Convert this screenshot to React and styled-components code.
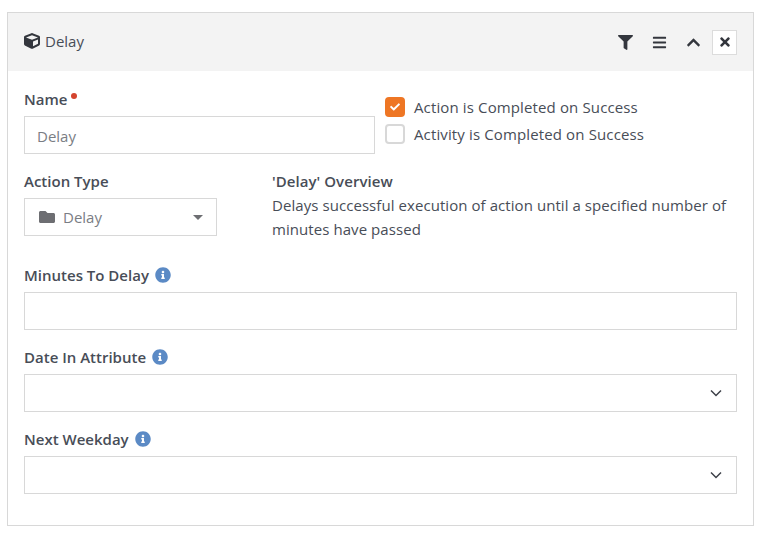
import styled, { createGlobalStyle } from 'styled-components';
import { FaCube, FaFilter, FaBars, FaChevronUp, FaTimes, FaFolder, FaInfoCircle, FaCheck } from 'react-icons/fa';

const GlobalStyle = createGlobalStyle`
  html, body {
    margin: 0;
    padding: 0;
    background: #fff;
  }
  body {
    font-family: 'Open Sans', sans-serif;
    font-size: 15px;
    line-height: 24px;
    color: #484d57;
  }
`;

const Page = styled.div`
  padding: 12px 7px 8px;
`;

const Panel = styled.section`
  box-sizing: border-box;
  width: 747px;
  height: 514px;
  border: 1px solid #d8d8d8;
`;

const PanelHeader = styled.header`
  height: 58px;
  background: #f3f3f3;
  display: flex;
  align-items: center;
  justify-content: space-between;
  padding: 0 16px;
`;

const PanelTitle = styled.div`
  display: flex;
  align-items: center;
  gap: 5px;
  margin-top: -2px;
  font-size: 15px;
  color: #484d57;
  svg {
    color: #33363d;
    font-size: 16px;
  }
`;

const Actions = styled.div`
  display: flex;
  align-items: center;
`;

const ActionIcon = styled.span`
  width: 34px;
  display: flex;
  justify-content: center;
  color: #33363d;
  font-size: 15px;
`;

const CloseButton = styled.span`
  box-sizing: border-box;
  width: 25px;
  height: 25px;
  margin-left: 2px;
  padding-bottom: 1px;
  background: #fff;
  border: 1px solid #dcdcdc;
  display: flex;
  align-items: center;
  justify-content: center;
  color: #33363d;
  font-size: 14px;
`;

const PanelBody = styled.div`
  padding: 16px 16px 0;
`;

const TopRow = styled.div`
  display: flex;
  gap: 10px;
`;

const NameColumn = styled.div`
  width: 351px;
`;

const CheckColumn = styled.div`
  padding-top: 8px;
  display: flex;
  flex-direction: column;
  gap: 3px;
`;

const Label = styled.label`
  display: flex;
  align-items: center;
  gap: 6px;
  height: 24px;
  margin-bottom: 5px;
  font-weight: 600;
  font-size: 15px;
  color: #484d57;
`;

const Required = styled.span`
  width: 6px;
  height: 6px;
  margin: -6px 0 0 -2px;
  border-radius: 50%;
  background: #d4442e;
`;

const Info = styled(FaInfoCircle)`
  color: #5b8ac5;
  font-size: 16px;
`;

const TextBox = styled.div`
  box-sizing: border-box;
  height: 38px;
  border: 1px solid #d8d8d8;
  background: #fff;
  padding: 0 12px;
  display: flex;
  align-items: center;
  color: #7a7d84;
`;

const NameBox = styled(TextBox)`
  padding-top: 1px;
`;

const CheckRow = styled.div`
  display: flex;
  align-items: center;
  gap: 9px;
  height: 24px;
  letter-spacing: 0.13px;
`;

const CheckBox = styled.span`
  box-sizing: border-box;
  width: 20px;
  height: 20px;
  border-radius: 4px;
  display: flex;
  align-items: center;
  justify-content: center;
  color: #fff;
  font-size: 10px;
  background: ${(p) => (p.$checked ? '#ee7624' : '#fff')};
  border: ${(p) => (p.$checked ? 'none' : '2px solid #d8d8d8')};
`;

const TypeRow = styled.div`
  display: flex;
  margin-top: 15px;
`;

const TypeColumn = styled.div`
  width: 248px;
`;

const TypeSelect = styled(TextBox)`
  width: 193px;
  padding: 0 13px 0 14px;
  gap: 8px;
  svg:first-child {
    color: #6d6e72;
    font-size: 16px;
  }
`;

const Caret = styled.span`
  margin-left: auto;
  width: 0;
  height: 0;
  border-left: 5px solid transparent;
  border-right: 5px solid transparent;
  border-top: 5px solid #6d6e72;
`;

const Overview = styled.div`
  width: 465px;
  letter-spacing: 0.065px;
`;

const OverviewTitle = styled.div`
  font-weight: 600;
`;

const Field = styled.div`
  margin-top: ${(p) => p.$top || 15}px;
`;

const SelectBox = styled(TextBox)`
  justify-content: flex-end;
  padding-right: 14px;
`;

const ChevronDown = () => (
  <svg width="12" height="8" viewBox="0 0 12 8" fill="none" stroke="#3d4048" strokeWidth="1.5">
    <path d="M1 1.5 6 6.5 11 1.5" />
  </svg>
);

export default function App() {
  return (
    <Page>
      <GlobalStyle />
      <Panel>
        <PanelHeader>
          <PanelTitle>
            <FaCube />
            Delay
          </PanelTitle>
          <Actions>
            <ActionIcon><FaFilter /></ActionIcon>
            <ActionIcon><FaBars /></ActionIcon>
            <ActionIcon><FaChevronUp /></ActionIcon>
            <CloseButton><FaTimes /></CloseButton>
          </Actions>
        </PanelHeader>
        <PanelBody>
          <TopRow>
            <NameColumn>
              <Label>Name<Required /></Label>
              <NameBox>Delay</NameBox>
            </NameColumn>
            <CheckColumn>
              <CheckRow>
                <CheckBox $checked><FaCheck /></CheckBox>
                Action is Completed on Success
              </CheckRow>
              <CheckRow>
                <CheckBox />
                Activity is Completed on Success
              </CheckRow>
            </CheckColumn>
          </TopRow>
          <TypeRow>
            <TypeColumn>
              <Label>Action Type</Label>
              <TypeSelect>
                <FaFolder />
                Delay
                <Caret />
              </TypeSelect>
            </TypeColumn>
            <Overview>
              <OverviewTitle>'Delay' Overview</OverviewTitle>
              Delays successful execution of action until a specified number of minutes have passed
            </Overview>
          </TypeRow>
          <Field $top={22}>
            <Label>Minutes To Delay <Info /></Label>
            <TextBox />
          </Field>
          <Field>
            <Label>Date In Attribute <Info /></Label>
            <SelectBox><ChevronDown /></SelectBox>
          </Field>
          <Field>
            <Label>Next Weekday <Info /></Label>
            <SelectBox><ChevronDown /></SelectBox>
          </Field>
        </PanelBody>
      </Panel>
    </Page>
  );
}
